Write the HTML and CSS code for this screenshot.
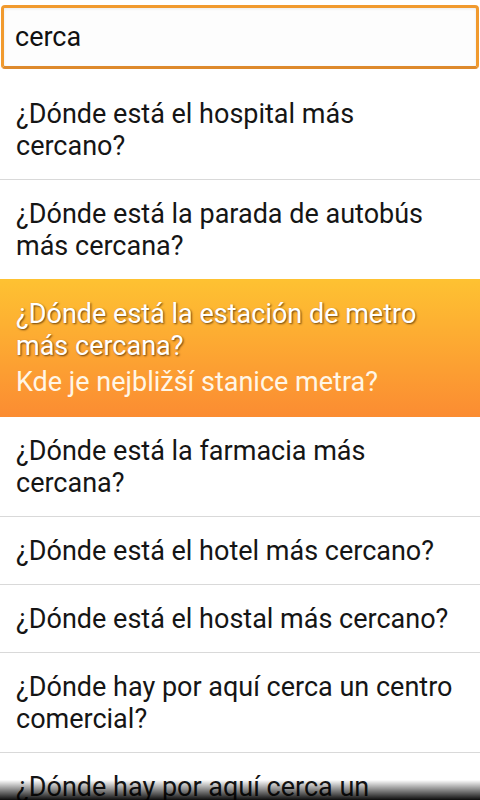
FILE: index.html
```html
<!DOCTYPE html>
<html lang="es">
<head>
<meta charset="utf-8">
<title>Frases</title>
<link rel="stylesheet" href="styles.css">
</head>
<body>
<div class="screen">
  <div class="search">
    <div class="field">cerca</div>
  </div>
  <ul class="list">
    <li class="item">¿Dónde está el hospital más cercano?</li>
    <li class="item">¿Dónde está la parada de autobús más cercana?</li>
    <li class="item selected">
      <div class="src">¿Dónde está la estación de metro más cercana?</div>
      <div class="tr">Kde je nejbližší stanice metra?</div>
    </li>
    <li class="item">¿Dónde está la farmacia más cercana?</li>
    <li class="item">¿Dónde está el hotel más cercano?</li>
    <li class="item">¿Dónde está el hostal más cercano?</li>
    <li class="item">¿Dónde hay por aquí cerca un centro comercial?</li>
    <li class="item">¿Dónde hay por aquí cerca un supermercado?</li>
  </ul>
  <div class="fade"></div>
</div>
</body>
</html>
```
FILE: styles.css
```css
html, body {
  margin: 0;
  padding: 0;
  background: #ffffff;
}
.screen {
  position: relative;
  width: 480px;
  height: 800px;
  overflow: hidden;
  font-family: Roboto, "Noto Sans", sans-serif;
  font-size: 27px;
  color: #151515;
}
.search {
  height: 80px;
  padding: 5px 1px 0;
  box-sizing: border-box;
}
.field {
  height: 64px;
  box-sizing: border-box;
  border: 3px solid #f19a2e;
  border-bottom-color: #de8a2c;
  border-radius: 4px;
  background: #fdfdfd;
  box-shadow: inset 0 1px 3px rgba(0,0,0,0.08);
  padding: 0 11px;
  display: flex;
  align-items: center;
  font-size: 27px;
  color: #111;
}
.list {
  list-style: none;
  margin: 0;
  padding: 0;
}
.item {
  padding: 18px 16px 17px;
  line-height: 32px;
  border-bottom: 1px solid #d9d9d9;
}
.item.selected {
  border-bottom: none;
  padding-bottom: 17px;
  background: linear-gradient(#fec232, #fb8c32);
  color: #ffffff;
  margin-top: -1px;
  padding-top: 19px;
}
.selected .src {
  text-shadow: 1px 1px 2px rgba(60,30,0,0.75);
}
.selected .tr {
  line-height: 36px;
  color: #fff6e6;
  margin-top: 2px;
}
.fade {
  position: absolute;
  left: 0;
  right: 0;
  bottom: 0;
  height: 20px;
  background: linear-gradient(rgba(0,0,0,0), rgba(0,0,0,0.95));
}
```
